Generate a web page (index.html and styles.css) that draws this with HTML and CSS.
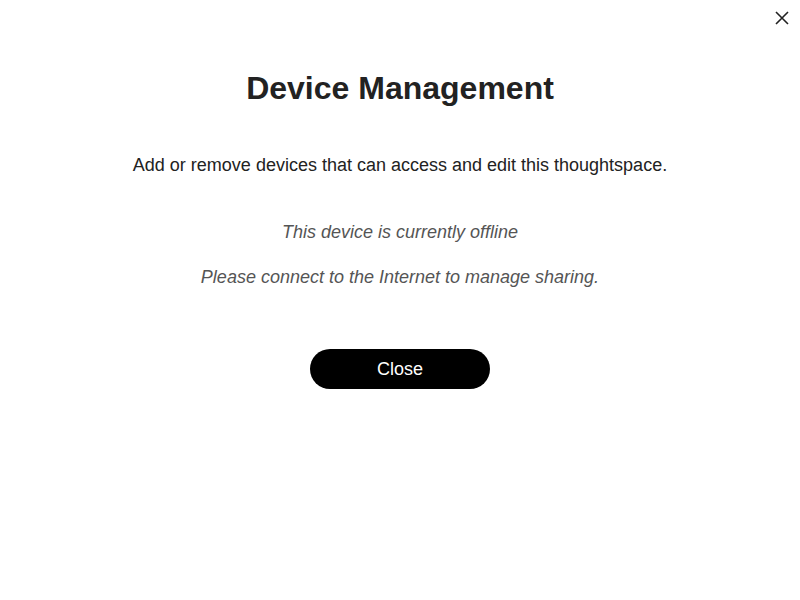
FILE: index.html
```html
<!DOCTYPE html>
<html>
<head>
<meta charset="utf-8">
<link rel="stylesheet" href="styles.css">
</head>
<body>
<div class="modal">
  <button class="close-x" aria-label="Close">
    <svg width="14" height="14" viewBox="0 0 14 14"><path d="M1 1L13 13M13 1L1 13" stroke="#222" stroke-width="1.6" fill="none"/></svg>
  </button>
  <h1 class="title">Device Management</h1>
  <p class="desc">Add or remove devices that can access and edit this thoughtspace.</p>
  <p class="offline first">This device is currently offline</p>
  <p class="offline">Please connect to the Internet to manage sharing.</p>
  <button class="close-btn">Close</button>
</div>
</body>
</html>
```
FILE: styles.css
```css
html, body {
  margin: 0;
  padding: 0;
  background: #fff;
  font-family: "Liberation Sans", Arial, sans-serif;
}
.modal {
  position: relative;
  width: 800px;
  height: 600px;
  display: flex;
  flex-direction: column;
  align-items: center;
  box-sizing: border-box;
  padding-top: 69px;
}
.close-x {
  position: absolute;
  top: 11px;
  right: 11px;
  background: none;
  border: none;
  padding: 0;
  width: 14px;
  height: 14px;
  cursor: pointer;
}
.close-x svg { display: block; }
.title {
  margin: 0;
  font-size: 32px;
  line-height: 38px;
  font-weight: bold;
  color: #222;
}
.desc {
  margin: 47px 0 0;
  font-size: 18px;
  line-height: 22px;
  color: #222;
}
.offline {
  margin: 23px 0 0;
  font-size: 18px;
  line-height: 22px;
  font-style: italic;
  color: #555;
}
.offline.first {
  margin-top: 45px;
}
.close-btn {
  margin-top: 61px;
  width: 180px;
  height: 40px;
  border-radius: 20px;
  background: #000;
  color: #fff;
  border: none;
  font-family: "Liberation Sans", Arial, sans-serif;
  font-size: 18px;
  cursor: pointer;
}
```
